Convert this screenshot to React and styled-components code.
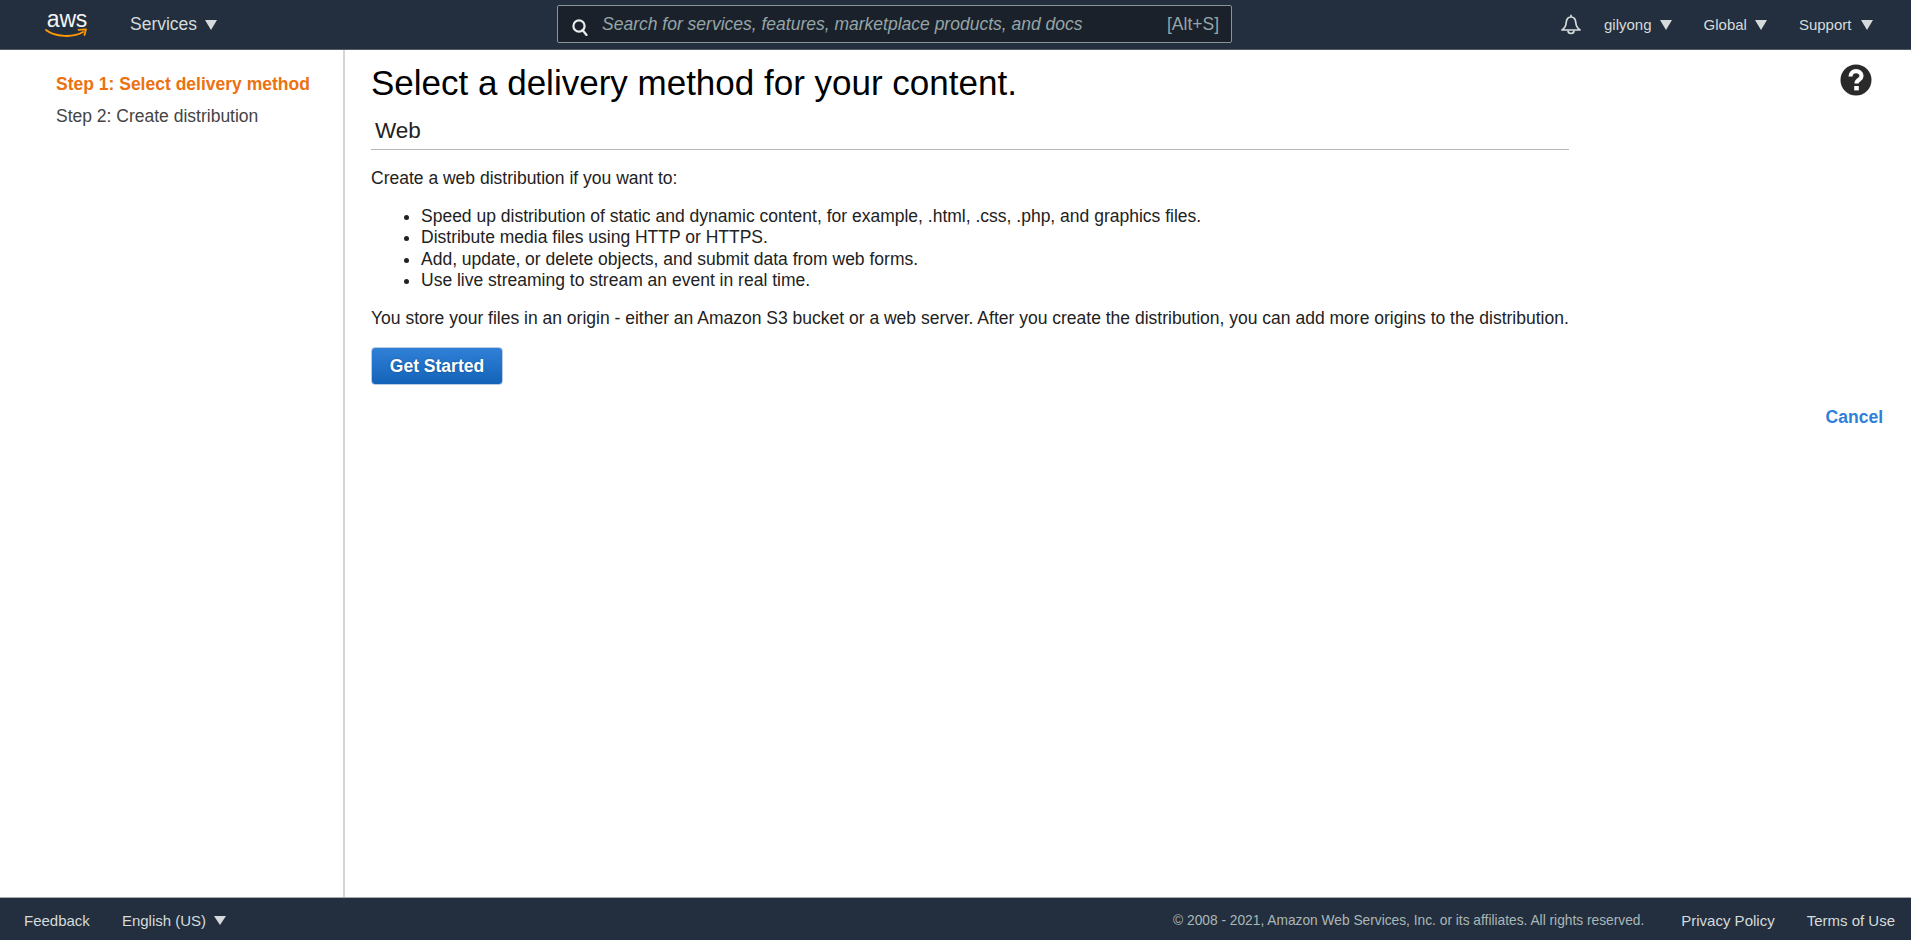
import React from "react";
import styled, { createGlobalStyle } from "styled-components";

const GlobalStyle = createGlobalStyle`
  html, body { margin: 0; padding: 0; height: 100%; background: #fff; }
  body { font-family: "Liberation Sans", Arial, sans-serif; color: #16191f; overflow: hidden; }
`;

const Page = styled.div`
  display: flex;
  flex-direction: column;
  height: 940px;
`;

const TopBar = styled.header`
  display: grid;
  grid-template-columns: 557px 675px 1fr;
  height: 49px;
  background: #232f3e;
  border-bottom: 1px solid #545b64;
  color: #d5dbdb;
`;

const BrandGroup = styled.div`
  display: flex;
  align-items: center;
  padding-left: 46px;
`;

const LogoBox = styled.div`
  position: relative;
  width: 42px;
  height: 32px;
  margin-right: 42px;
`;

const LogoText = styled.span`
  display: block;
  font-size: 23px;
  line-height: 22px;
  letter-spacing: -0.2px;
  color: #f2f3f3;
  text-align: center;
  margin-top: -1px;
`;

const LogoSmile = styled.svg`
  position: absolute;
  left: -1px;
  top: 20px;
  overflow: visible;
`;

const NavItem = styled.span`
  display: inline-flex;
  align-items: center;
  gap: ${(p) => p.$gap || 8}px;
  font-size: ${(p) => p.$size || 15}px;
  color: #d5dbdb;
  white-space: nowrap;
`;

const Caret = styled.i`
  display: block;
  width: 0;
  height: 0;
  border-left: 6.5px solid transparent;
  border-right: 6.5px solid transparent;
  border-top: 10px solid #d5dbdb;
`;

const SearchCell = styled.div`
  display: flex;
  align-items: center;
  padding-bottom: 1px;
`;

const SearchBox = styled.div`
  display: flex;
  align-items: center;
  box-sizing: border-box;
  width: 675px;
  height: 38px;
  padding: 0 12px 0 13px;
  background: #1a212b;
  border: 1px solid #879596;
  border-radius: 2px;
`;

const SearchGlyphIcon = styled.svg`
  flex: none;
  margin-top: 6px;
`;

const SearchHint = styled.span`
  flex: 1;
  margin-left: 13px;
  font-size: 17.5px;
  font-style: italic;
  color: #95a5a6;
  white-space: nowrap;
`;

const SearchKey = styled.span`
  font-size: 17.5px;
  color: #95a5a6;
`;

const RightNav = styled.div`
  display: flex;
  align-items: center;
  padding-left: 328px;
`;

const BellSlot = styled.span`
  display: flex;
  margin-right: 22px;
`;

const RightItem = styled.span`
  display: flex;
  margin-right: ${(p) => p.$after}px;
`;

const Body = styled.div`
  flex: 1;
  display: flex;
  min-height: 0;
`;

const Sidebar = styled.nav`
  box-sizing: border-box;
  width: 345px;
  padding: 18px 0 0 56px;
  border-right: 2px solid #d5d5d5;
`;

const Step = styled.div`
  height: 32px;
  font-size: 17.5px;
  line-height: 32px;
  font-weight: ${(p) => (p.$active ? 700 : 400)};
  color: ${(p) => (p.$active ? "#ec7211" : "#444")};
`;

const Content = styled.main`
  position: relative;
  flex: 1;
  padding: 0 0 0 26px;
`;

const Column = styled.section`
  width: 1198px;
`;

const Title = styled.h1`
  margin: 9px 0 0;
  font-size: 35px;
  line-height: 48px;
  font-weight: 400;
  color: #000;
`;

const SectionName = styled.h2`
  margin: 11px 0 0;
  padding: 0 0 5px 4px;
  font-size: 22.5px;
  line-height: 26px;
  font-weight: 400;
  color: #222;
  border-bottom: 1px solid #b8b8b8;
`;

const Para = styled.p`
  margin: ${(p) => p.$top}px 0 0;
  font-size: 17.5px;
  line-height: 21px;
  color: #222;
  white-space: nowrap;
`;

const Bullets = styled.ul`
  margin: 17px 0 0;
  padding: 0 0 0 50px;
  font-size: 17.5px;
  line-height: 21.3px;
  color: #222;
`;

const PrimaryButton = styled.button`
  display: block;
  box-sizing: border-box;
  width: 132px;
  height: 38px;
  margin-top: 18px;
  padding: 0;
  font-family: inherit;
  font-size: 17.5px;
  font-weight: 700;
  color: #fff;
  background: linear-gradient(#3080d8, #1263b8);
  border: 1px solid #b8cde4;
  border-radius: 4px;
  text-shadow: 0 0 2px rgba(0, 0, 0, 0.35);
`;

const HelpIcon = styled.svg`
  position: absolute;
  top: 14px;
  right: 39px;
`;

const CancelLink = styled.a`
  position: absolute;
  top: 357px;
  right: 28px;
  font-size: 17.5px;
  line-height: 20px;
  font-weight: 700;
  color: #2e7fd9;
`;

const Footer = styled.footer`
  display: flex;
  align-items: center;
  height: 40px;
  padding: 2px 16px 0 24px;
  background: #232f3e;
  border-top: 1px solid #a9adb2;
  font-size: 15px;
  color: #d5dbdb;
`;

const FooterLeft = styled.div`
  flex: 1;
  display: flex;
  align-items: center;
  gap: 32px;
`;

const Copyright = styled.span`
  font-size: 13.75px;
  color: #aab7b8;
  margin-right: 37px;
`;

const FooterLink = styled.a`
  margin-left: ${(p) => p.$left || 0}px;
`;

const SmallCaret = styled(Caret)`
  border-left-width: 6px;
  border-right-width: 6px;
  border-top-width: 9px;
`;

function Logo() {
  return (
    <LogoBox>
      <LogoText>aws</LogoText>
      <LogoSmile width="42" height="10" viewBox="0 0 42 10" fill="none">
        <path d="M1 1 C10 8 28 9 38 3" stroke="#f90" strokeWidth="2" strokeLinecap="round" />
        <path d="M33.5 0.8 L41 0.3 L39.5 6" stroke="#f90" strokeWidth="1.8" strokeLinecap="round" strokeLinejoin="round" />
      </LogoSmile>
    </LogoBox>
  );
}

function SearchGlyph() {
  return (
    <SearchGlyphIcon width="18" height="18" viewBox="0 0 18 18" fill="none" stroke="#eaeded" strokeWidth="2.2">
      <circle cx="8" cy="8" r="5.6" />
      <path d="M11.5 12 L15.5 17" strokeLinecap="round" />
    </SearchGlyphIcon>
  );
}

function Bell() {
  return (
    <svg width="22" height="22" viewBox="0 0 22 22" fill="none" stroke="#d5dbdb" strokeWidth="1.7" strokeLinejoin="round">
      <path d="M2 16 C4.8 14 6 12 6.2 8.5 C6.5 4.8 8.5 3 11 3 C13.5 3 15.5 4.8 15.8 8.5 C16 12 17.2 14 20 16 Z" />
      <path d="M11 0.8 V3" />
      <path d="M8 16.5 C8 20.5 14 20.5 14 16.5" />
    </svg>
  );
}

function Help() {
  return (
    <HelpIcon width="32" height="32" viewBox="0 0 32 32">
      <circle cx="16" cy="16" r="15.5" fill="#2a2a2a" />
      <path d="M10.5 12.5 C10.5 5.5 21.5 5.5 21.5 12 C21.5 16 16.5 15.5 16.5 19.5" fill="none" stroke="#fff" strokeWidth="4.2" />
      <rect x="14.2" y="22" width="4.6" height="4.4" fill="#fff" />
    </HelpIcon>
  );
}

const bullets = [
  "Speed up distribution of static and dynamic content, for example, .html, .css, .php, and graphics files.",
  "Distribute media files using HTTP or HTTPS.",
  "Add, update, or delete objects, and submit data from web forms.",
  "Use live streaming to stream an event in real time.",
];

export default function App() {
  return (
    <Page>
      <GlobalStyle />
      <TopBar>
        <BrandGroup>
          <Logo />
          <NavItem $size={17.5}>
            Services <Caret />
          </NavItem>
        </BrandGroup>
        <SearchCell>
          <SearchBox>
            <SearchGlyph />
            <SearchHint>Search for services, features, marketplace products, and docs</SearchHint>
            <SearchKey>[Alt+S]</SearchKey>
          </SearchBox>
        </SearchCell>
        <RightNav>
          <BellSlot>
            <Bell />
          </BellSlot>
          <RightItem $after={32}>
            <NavItem>
              gilyong <Caret />
            </NavItem>
          </RightItem>
          <RightItem $after={32}>
            <NavItem>
              Global <Caret />
            </NavItem>
          </RightItem>
          <RightItem $after={0}>
            <NavItem $gap={10}>
              Support <Caret />
            </NavItem>
          </RightItem>
        </RightNav>
      </TopBar>
      <Body>
        <Sidebar>
          <Step $active>Step 1: Select delivery method</Step>
          <Step>Step 2: Create distribution</Step>
        </Sidebar>
        <Content>
          <Column>
            <Title>Select a delivery method for your content.</Title>
            <SectionName>Web</SectionName>
            <Para $top={18}>Create a web distribution if you want to:</Para>
            <Bullets>
              {bullets.map((text) => (
                <li key={text}>{text}</li>
              ))}
            </Bullets>
            <Para $top={17}>
              You store your files in an origin - either an Amazon S3 bucket or a web server. After you create the
              distribution, you can add more origins to the distribution.
            </Para>
            <PrimaryButton>Get Started</PrimaryButton>
          </Column>
          <Help />
          <CancelLink>Cancel</CancelLink>
        </Content>
      </Body>
      <Footer>
        <FooterLeft>
          <span>Feedback</span>
          <NavItem>
            English (US) <SmallCaret />
          </NavItem>
        </FooterLeft>
        <Copyright>© 2008 - 2021, Amazon Web Services, Inc. or its affiliates. All rights reserved.</Copyright>
        <FooterLink>Privacy Policy</FooterLink>
        <FooterLink $left={32}>Terms of Use</FooterLink>
      </Footer>
    </Page>
  );
}
